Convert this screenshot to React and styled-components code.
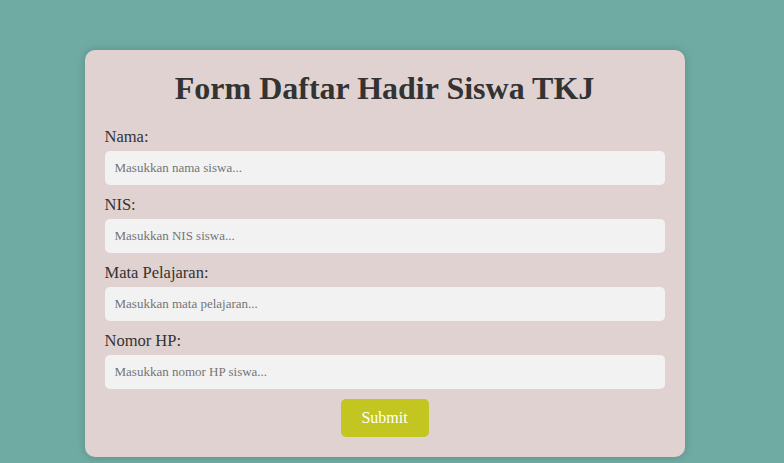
import styled, { createGlobalStyle } from "styled-components";

const GlobalStyle = createGlobalStyle`
  html, body {
    margin: 0;
    padding: 0;
    background: #70aba3;
    font-family: "Liberation Serif", "Times New Roman", serif;
  }
`;

const Page = styled.div`
  min-height: 463px;
  display: flex;
  justify-content: center;
  align-items: flex-start;
  padding: 50px 15px 0 0;
  box-sizing: border-box;
`;

const Card = styled.form`
  width: 600px;
  box-sizing: border-box;
  padding: 20px;
  background: #e0d2d1;
  border-radius: 10px;
  box-shadow: 0 0 10px rgba(0, 0, 0, 0.18);
  display: flex;
  flex-direction: column;
`;

const Title = styled.h2`
  margin: 0 0 20px;
  font-size: 32px;
  line-height: 37px;
  font-weight: 700;
  text-align: center;
  color: #333333;
`;

const Label = styled.label`
  display: block;
  font-size: 16.5px;
  line-height: 20px;
  color: #333333;
  margin-bottom: 4px;
`;

const Input = styled.input`
  display: block;
  width: 100%;
  height: 34px;
  box-sizing: border-box;
  border: none;
  border-radius: 5px;
  background: #f2f2f2;
  padding: 0 10px;
  margin-bottom: 10px;
  font-family: "Liberation Serif", "Times New Roman", serif;
  font-size: 13px;
  color: #333;
  outline: none;

  &::placeholder {
    color: #757575;
  }
`;

const Button = styled.button`
  align-self: center;
  width: 88px;
  height: 38px;
  border: none;
  border-radius: 5px;
  background: #c3c520;
  color: #ffffff;
  font-family: "Liberation Serif", "Times New Roman", serif;
  font-size: 16px;
  cursor: pointer;
`;

const fields = [
  { id: "nama", label: "Nama:", placeholder: "Masukkan nama siswa..." },
  { id: "nis", label: "NIS:", placeholder: "Masukkan NIS siswa..." },
  { id: "mapel", label: "Mata Pelajaran:", placeholder: "Masukkan mata pelajaran..." },
  { id: "hp", label: "Nomor HP:", placeholder: "Masukkan nomor HP siswa..." },
];

export default function App() {
  return (
    <>
      <GlobalStyle />
      <Page>
        <Card onSubmit={(e) => e.preventDefault()}>
          <Title>Form Daftar Hadir Siswa TKJ</Title>
          {fields.map((f) => (
            <div key={f.id}>
              <Label htmlFor={f.id}>{f.label}</Label>
              <Input id={f.id} type="text" placeholder={f.placeholder} />
            </div>
          ))}
          <Button type="submit">Submit</Button>
        </Card>
      </Page>
    </>
  );
}
